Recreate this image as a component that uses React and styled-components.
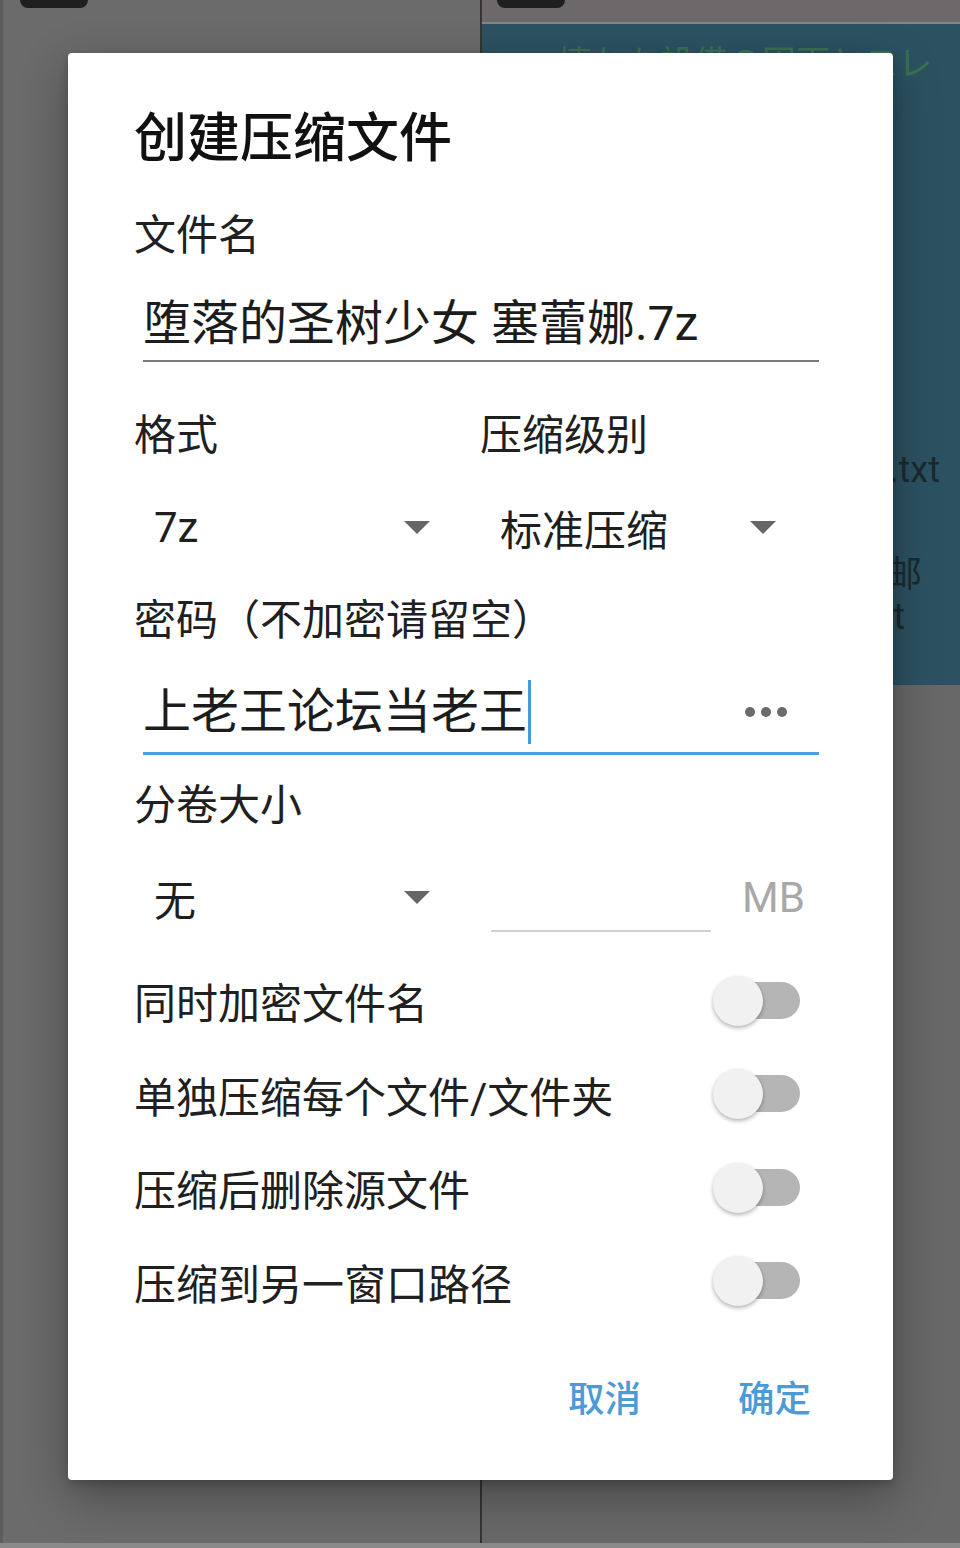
import React from "react";
import styled, { createGlobalStyle } from "styled-components";

const Global = createGlobalStyle`
  html, body { margin: 0; padding: 0; }
  body {
    width: 960px;
    height: 1548px;
    overflow: hidden;
    background: #6a6a6a;
    font-family: Roboto, "Noto Sans CJK SC", sans-serif;
  }
`;

const Screen = styled.div`
  position: relative;
  width: 960px;
  height: 1548px;
  display: grid;
  grid-template-columns: 480px 1fr;
  grid-template-rows: 1fr 5px;
  overflow: hidden;
`;

const LeftPane = styled.div`
  background: #6b6b6b;
  border-left: 3px solid #5c5c5c;
  padding-left: 17px;
`;

const Stub = styled.div`
  width: 68px;
  height: 8px;
  background: #1f1f1f;
  border-radius: 0 0 9px 9px;
`;

const RightPane = styled.div`
  border-left: 2px solid #353535;
  background: #686868;
  display: flex;
  flex-direction: column;
`;

const TopStrip = styled.div`
  height: 22px;
  background: #6d696b;
  border-bottom: 2px solid #7b898e;
  padding-left: 15px;
`;

const Teal = styled.div`
  height: 661px;
  background: #2c5262;
  display: flex;
  flex-direction: column;
`;

const TealHeader = styled.div`
  margin-top: 21px;
  padding-right: 28px;
  text-align: right;
  font-size: 34px;
  line-height: 36px;
  color: #3a7350;
  white-space: nowrap;
`;

const TealLine = styled.div`
  margin-top: ${(p) => p.$top || 0}px;
  padding-right: ${(p) => p.$right}px;
  text-align: right;
  font-size: 36px;
  line-height: 42px;
  color: #1b2a30;
  white-space: nowrap;
`;

const BottomBar = styled.div`
  grid-column: 1 / -1;
  background: #8a8a8a;
`;

const Dialog = styled.div`
  position: absolute;
  left: 68px;
  top: 53px;
  width: 825px;
  height: 1427px;
  box-sizing: border-box;
  background: #ffffff;
  border-radius: 4px;
  box-shadow: 0 16px 48px rgba(0, 0, 0, 0.32), 0 4px 10px rgba(0, 0, 0, 0.18);
  padding: 56px 74px 0 66px;
  display: flex;
  flex-direction: column;
`;

const Title = styled.div`
  font-size: 53px;
  line-height: 60px;
  font-weight: 500;
  color: #111;
`;

const Label = styled.div`
  margin-top: ${(p) => p.$top || 0}px;
  font-size: 42px;
  line-height: 50px;
  color: #202020;
  white-space: nowrap;
`;

const TextField = styled.div`
  margin-top: ${(p) => p.$top}px;
  margin-left: 9px;
  height: 56px;
  display: flex;
  align-items: center;
  font-size: 48px;
  line-height: 56px;
  color: #1c1c1c;
  white-space: nowrap;
  padding-bottom: ${(p) => (p.$focused ? 12 : 8)}px;
  border-bottom: ${(p) => (p.$focused ? "3px solid #4aa1dd" : "2px solid #7a7a7a")};
`;

const Cursor = styled.span`
  display: inline-block;
  width: 3px;
  height: 64px;
  margin: -4px 0 -4px 1px;
  background: #4a9ad6;
`;

const Spacer = styled.span`
  flex: 1;
`;

const MoreDots = styled.svg`
  width: 42px;
  height: 10px;
  margin-right: 32px;
  fill: #6b6b6b;
`;

const TwoCols = styled.div`
  margin-top: ${(p) => p.$top}px;
  display: grid;
  grid-template-columns: 1fr 1fr;
  column-gap: 7px;
  align-items: start;
`;

const Spinner = styled.div`
  width: 310px;
  height: 60px;
  box-sizing: border-box;
  padding: 0 14px 0 20px;
  display: flex;
  align-items: center;
  font-size: 42px;
  color: #1e1e1e;
  white-space: nowrap;
`;

const SpinnerText = styled.span`
  flex: 1;
`;

const Caret = styled.span`
  width: 0;
  height: 0;
  border-left: 13px solid transparent;
  border-right: 13px solid transparent;
  border-top: 13px solid #666;
`;

const SizeField = styled.div`
  display: flex;
  align-items: flex-start;
`;

const SizeInput = styled.div`
  margin-left: 11px;
  width: 220px;
  height: 63px;
  border-bottom: 2px solid #d0d0d0;
`;

const Unit = styled.div`
  margin-left: 31px;
  height: 60px;
  display: flex;
  align-items: center;
  font-size: 42px;
  color: #a8a8a8;
`;

const SwitchList = styled.div`
  margin-top: 22px;
  display: flex;
  flex-direction: column;
`;

const SwitchRow = styled.div`
  height: 93.5px;
  display: flex;
  align-items: center;
  justify-content: space-between;
  font-size: 42px;
  color: #202020;
  white-space: nowrap;
`;

const Toggle = styled.div`
  position: relative;
  width: 88px;
  height: 56px;
  margin-right: 19px;
  flex-shrink: 0;

  &::after {
    content: "";
    position: absolute;
    left: 22px;
    right: 0;
    top: 9px;
    height: 37px;
    border-radius: 19px;
    background: #b5b5b5;
  }

  &::before {
    content: "";
    position: absolute;
    left: 1px;
    top: 3px;
    width: 50px;
    height: 50px;
    border-radius: 50%;
    background: #f1f1f1;
    box-shadow: 0 2px 4px rgba(0, 0, 0, 0.3);
    z-index: 1;
  }
`;

const Actions = styled.div`
  margin-top: 42px;
  margin-right: 8px;
  display: flex;
  justify-content: flex-end;
  gap: 97px;
`;

const ActionButton = styled.button`
  border: none;
  background: transparent;
  padding: 0;
  height: 60px;
  font-family: Roboto, "Noto Sans CJK SC", sans-serif;
  font-size: 36.5px;
  line-height: 60px;
  font-weight: 500;
  color: #4b9bd6;
  cursor: pointer;
`;

const switches = [
  "同时加密文件名",
  "单独压缩每个文件/文件夹",
  "压缩后删除源文件",
  "压缩到另一窗口路径",
];

export default function App() {
  return (
    <>
      <Global />
      <Screen>
        <LeftPane>
          <Stub />
        </LeftPane>
        <RightPane>
          <TopStrip>
            <Stub />
          </TopStrip>
          <Teal>
            <TealHeader>壊れた設備の図面とスレ</TealHeader>
            <TealLine $top={368} $right={20}>新建文本文档.txt</TealLine>
            <TealLine $top={63} $right={38}>联系邮</TealLine>
            <TealLine $right={55}>mail.txt</TealLine>
          </Teal>
        </RightPane>
        <BottomBar />

        <Dialog>
          <Title>创建压缩文件</Title>

          <Label $top={42}>文件名</Label>
          <TextField $top={35}>堕落的圣树少女 塞蕾娜.7z</TextField>

          <TwoCols $top={49}>
            <Label>格式</Label>
            <Label>压缩级别</Label>
          </TwoCols>
          <TwoCols $top={36}>
            <Spinner>
              <SpinnerText>7z</SpinnerText>
              <Caret />
            </Spinner>
            <Spinner>
              <SpinnerText>标准压缩</SpinnerText>
              <Caret />
            </Spinner>
          </TwoCols>

          <Label $top={39}>密码（不加密请留空）</Label>
          <TextField $top={38} $focused>
            上老王论坛当老王
            <Cursor />
            <Spacer />
            <MoreDots viewBox="0 0 42 10">
              <circle cx="5" cy="5" r="5" />
              <circle cx="21" cy="5" r="5" />
              <circle cx="37" cy="5" r="5" />
            </MoreDots>
          </TextField>

          <Label $top={26}>分卷大小</Label>
          <TwoCols $top={36}>
            <Spinner>
              <SpinnerText>无</SpinnerText>
              <Caret />
            </Spinner>
            <SizeField>
              <SizeInput />
              <Unit>MB</Unit>
            </SizeField>
          </TwoCols>

          <SwitchList>
            {switches.map((s) => (
              <SwitchRow key={s}>
                {s}
                <Toggle />
              </SwitchRow>
            ))}
          </SwitchList>

          <Actions>
            <ActionButton>取消</ActionButton>
            <ActionButton>确定</ActionButton>
          </Actions>
        </Dialog>
      </Screen>
    </>
  );
}
